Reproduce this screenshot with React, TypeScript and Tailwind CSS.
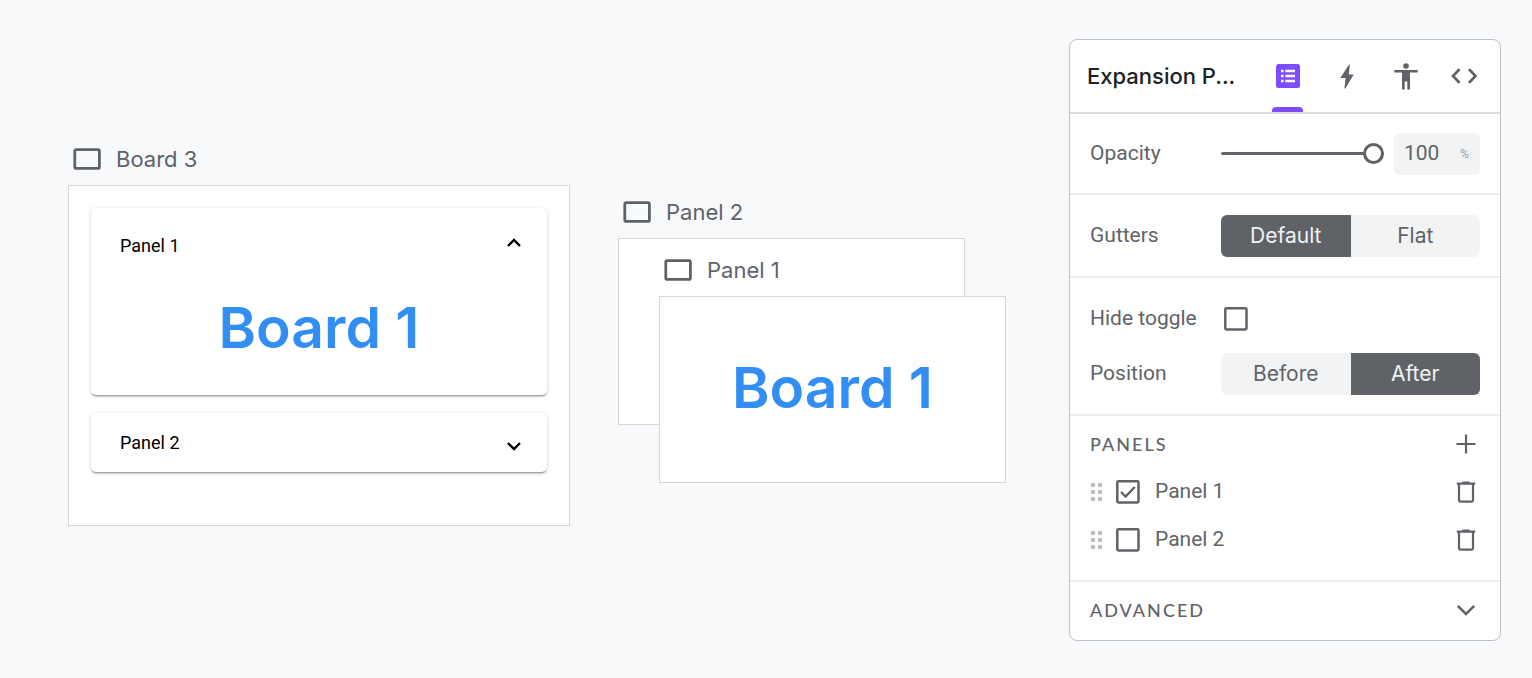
import { useState, type ReactNode } from 'react';

const GREY = '#5f6368';

function BoardIcon() {
  return (
    <svg width="28" height="22" viewBox="0 0 28 22" fill="none" stroke={GREY} strokeWidth="2.8" aria-hidden="true">
      <rect x="1.8" y="1.6" width="24.6" height="18.8" rx="1.5" />
    </svg>
  );
}

function BoardLabel({ children }: { children: ReactNode }) {
  return (
    <h2 className="flex h-7 items-center gap-[15px] pl-[5px] text-[22px] font-normal text-[#5f6368]">
      <BoardIcon />
      {children}
    </h2>
  );
}

function Chevron({ up = false }: { up?: boolean }) {
  return (
    <svg width="14" height="10" viewBox="0 0 14 10" fill="none" stroke="#000" strokeWidth="2.4" aria-hidden="true">
      <path d={up ? 'M1 8 L7 2 L13 8' : 'M1 2 L7 8 L13 2'} />
    </svg>
  );
}

const cardClass =
  'rounded-[5px] bg-white font-[Roboto,sans-serif] shadow-[0_2px_2px_-1px_rgba(0,0,0,0.4),0_1px_4px_rgba(0,0,0,0.16)]';

function Canvas() {
  return (
    <main className="flex shrink-0 items-start pl-[68px]">
      <section className="w-[502px] pt-[145px]">
        <BoardLabel>Board 3</BoardLabel>
        <div className="mt-3 flex flex-col gap-[18px] border border-[#d5d7da] bg-white px-[22px] pt-[22px] pb-[53px]">
          <article className={`${cardClass} h-[187px]`}>
            <button className="flex w-full items-center justify-between pt-[26px] pr-[26px] pl-[29px] text-lg leading-6 text-black">
              Panel 1
              <span className="pb-[6px]">
                <Chevron up />
              </span>
            </button>
            <p className="pt-[34px] text-center font-[Inter,sans-serif] text-[57px] leading-[72px] font-semibold text-[#338ef3]">
              Board 1
            </p>
          </article>
          <article className={cardClass}>
            <button className="flex h-[59px] w-full items-center justify-between pr-[26px] pl-[29px] text-lg text-black">
              Panel 2
              <span className="pt-[6px]">
                <Chevron />
              </span>
            </button>
          </article>
        </div>
      </section>
      <section className="relative ml-12 w-[347px] pt-[198px]">
        <BoardLabel>Panel 2</BoardLabel>
        <div className="mt-3 h-[187px] border border-[#d5d7da] bg-white" />
        <div className="absolute top-[256px] left-[41px] w-[347px]">
          <BoardLabel>Panel 1</BoardLabel>
          <div className="mt-3 flex h-[187px] items-center justify-center border border-[#d5d7da] bg-white pb-1 text-[57px] font-semibold text-[#338ef3]">
            Board 1
          </div>
        </div>
      </section>
    </main>
  );
}

function Segmented({ label, options, initial }: { label: string; options: string[]; initial: number }) {
  const [active, setActive] = useState(initial);
  return (
    <div className="flex items-center">
      <span className="w-[131px] text-[21px] text-[#5f6368]">{label}</span>
      <div
        role="group"
        aria-label={label}
        className="grid h-[42px] flex-1 grid-cols-2 overflow-hidden rounded-md bg-[#f1f3f4] font-[Inter,sans-serif] text-[21px]"
      >
        {options.map((option, i) => (
          <button
            key={option}
            aria-pressed={i === active}
            onClick={() => setActive(i)}
            className={i === active ? 'bg-[#5f6368] text-[#f1f3f4]' : 'text-[#5f6368]'}
          >
            {option}
          </button>
        ))}
      </div>
    </div>
  );
}

function CheckBox({ id, initial = false }: { id: string; initial?: boolean }) {
  const [checked, setChecked] = useState(initial);
  return (
    <span className="relative flex size-6">
      <input
        id={id}
        type="checkbox"
        checked={checked}
        onChange={(e) => setChecked(e.target.checked)}
        className="size-6 appearance-none"
      />
      <svg className="pointer-events-none absolute inset-0" width="24" height="24" viewBox="0 0 24 24" fill="none" stroke={GREY} strokeWidth="2.5" aria-hidden="true">
        <rect x="1.3" y="1.3" width="21.2" height="21.2" rx="1.2" />
        {checked && <path d="M5 12 L9.6 16.6 L18.8 7" strokeWidth="2.4" />}
      </svg>
    </span>
  );
}

function PanelRow({ id, name, checked }: { id: string; name: string; checked?: boolean }) {
  return (
    <li className="flex h-12 items-center">
      <svg width="13" height="20" viewBox="0 0 13 20" fill="#bdbdbd" aria-hidden="true">
        {[3, 10, 17].map((y) => (
          <g key={y}>
            <circle cx="3" cy={y} r="2.3" />
            <circle cx="10" cy={y} r="2.3" />
          </g>
        ))}
      </svg>
      <span className="ml-[13px]">
        <CheckBox id={id} initial={checked} />
      </span>
      <label htmlFor={id} className="ml-[15px] flex-1 text-[21px] text-[#5f6368]">
        {name}
      </label>
      <button aria-label={`Delete ${name}`} className="mr-1">
        <svg width="20" height="22" viewBox="0 0 20 22" fill="none" stroke={GREY} strokeWidth="2.2" aria-hidden="true">
          <path d="M0.8 2.6 H19.2 M6.5 1.6 H13.5" />
          <path d="M3 3 V19 Q3 20.6 4.6 20.6 H15.4 Q17 20.6 17 19 V3" />
        </svg>
      </button>
    </li>
  );
}

function Inspector() {
  const [opacity, setOpacity] = useState(100);
  return (
    <aside className="mt-[39px] mr-[31px] ml-auto w-[432px] shrink-0 rounded-lg border border-[#bdc1c6] bg-white font-[Roboto,sans-serif]">
      <header className="flex h-[74px] items-stretch border-b-2 border-[#dadce0] pr-[20px] pl-[17px] font-[Inter,sans-serif]">
        <h1 className="flex-1 self-center text-[22px] font-medium whitespace-nowrap text-[#202124]">Expansion P...</h1>
        <nav className="flex gap-7">
          <button aria-label="Properties" className="relative flex w-[31px] items-center justify-center">
            <svg width="24" height="24" viewBox="0 0 24 24" aria-hidden="true">
              <rect width="24" height="24" rx="2.5" fill="#7c4dff" />
              <path d="M5 7 H7.6 M9.4 7 H19 M5 12 H7.6 M9.4 12 H19 M5 17 H7.6 M9.4 17 H19" stroke="#fff" strokeWidth="2.5" />
            </svg>
            <span className="absolute inset-x-0 bottom-0 h-[5px] rounded-t-[4px] bg-[#7c4dff]" />
          </button>
          <button aria-label="Interactions" className="flex w-[31px] items-center justify-center">
            <svg width="14" height="25" viewBox="0 0 14 25" fill={GREY} aria-hidden="true">
              <path d="M9 0.5 L0.3 14 H5.6 L4.4 24.5 H5.4 L13.7 10.5 H8.8 L9.8 0.5 Z" />
            </svg>
          </button>
          <button aria-label="Accessibility" className="flex w-[31px] items-center justify-center">
            <svg width="24" height="27" viewBox="0 0 24 27" fill={GREY} aria-hidden="true">
              <circle cx="12" cy="3" r="2.8" />
              <path d="M0.3 7 H23.7 V9.6 H16 V26.5 H13.3 V18.5 H10.7 V26.5 H8 V9.6 H0.3 Z" />
            </svg>
          </button>
          <button aria-label="Code" className="flex w-[31px] items-center justify-center">
            <svg width="27" height="16" viewBox="0 0 27 16" fill="none" stroke={GREY} strokeWidth="2.7" aria-hidden="true">
              <path d="M8.5 1.2 L2 8 L8.5 14.8 M18 1.2 L24.5 8 L18 14.8" />
            </svg>
          </button>
        </nav>
      </header>

      <section className="flex h-[81px] items-center border-b-2 border-[#ececed] px-5">
        <label htmlFor="opacity" className="w-[131px] text-[21px] text-[#5f6368]">
          Opacity
        </label>
        <input
          id="opacity"
          type="range"
          value={opacity}
          onChange={(e) => setOpacity(Number(e.target.value))}
          className="h-6 min-w-0 flex-1 appearance-none bg-transparent [&::-webkit-slider-runnable-track]:h-[3px] [&::-webkit-slider-runnable-track]:rounded-full [&::-webkit-slider-runnable-track]:bg-[#5f6368] [&::-webkit-slider-thumb]:-mt-[9px] [&::-webkit-slider-thumb]:size-[21px] [&::-webkit-slider-thumb]:appearance-none [&::-webkit-slider-thumb]:rounded-full [&::-webkit-slider-thumb]:border-3 [&::-webkit-slider-thumb]:border-[#5f6368] [&::-webkit-slider-thumb]:bg-white"
        />
        <div className="ml-[10px] flex h-[42px] w-[86px] items-center justify-between rounded-md bg-[#f1f3f4] pr-[11px] pl-[10px]">
          <input
            aria-label="Opacity value"
            value={opacity}
            onChange={(e) => setOpacity(Number(e.target.value) || 0)}
            className="w-10 bg-transparent text-[21px] text-[#5f6368]"
          />
          <span className="text-xs text-[#9aa0a6]">%</span>
        </div>
      </section>

      <section className="flex h-[83px] flex-col justify-center border-b-2 border-[#ececed] px-5">
        <Segmented label="Gutters" options={['Default', 'Flat']} initial={0} />
      </section>

      <section className="border-b-2 border-[#ececed] px-5 pt-[13px] pb-[19px]">
        <div className="mb-[7px] flex h-[55px] items-center">
          <label htmlFor="hide" className="w-[134px] text-[21px] text-[#5f6368]">
            Hide toggle
          </label>
          <CheckBox id="hide" />
        </div>
        <Segmented label="Position" options={['Before', 'After']} initial={1} />
      </section>

      <section className="border-b-2 border-[#ececed] px-5 pt-2 pb-4">
        <div className="mb-1 flex h-10 items-center justify-between">
          <h2 className="font-[Lato,sans-serif] text-lg font-medium tracking-[2px] text-[#5f6368]">PANELS</h2>
          <button aria-label="Add panel" className="mr-1">
            <svg width="20" height="20" viewBox="0 0 20 20" stroke={GREY} strokeWidth="2.2" aria-hidden="true">
              <path d="M10 0.5 V19.5 M0.5 10 H19.5" />
            </svg>
          </button>
        </div>
        <ul>
          <PanelRow id="panel-1" name="Panel 1" checked />
          <PanelRow id="panel-2" name="Panel 2" />
        </ul>
      </section>

      <button className="flex h-[58px] w-full items-center justify-between pr-6 pb-[3px] pl-5">
        <span className="font-[Lato,sans-serif] text-lg font-medium tracking-[2px] text-[#5f6368]">ADVANCED</span>
        <svg width="20" height="12" viewBox="0 0 20 12" fill="none" stroke={GREY} strokeWidth="2.5" aria-hidden="true">
          <path d="M1.8 1.8 L10 10 L18.2 1.8" />
        </svg>
      </button>
    </aside>
  );
}

export default function App() {
  return (
    <div className="flex min-h-screen items-start bg-[#f8f9fb] font-[Inter,sans-serif]">
      <Canvas />
      <Inspector />
    </div>
  );
}
